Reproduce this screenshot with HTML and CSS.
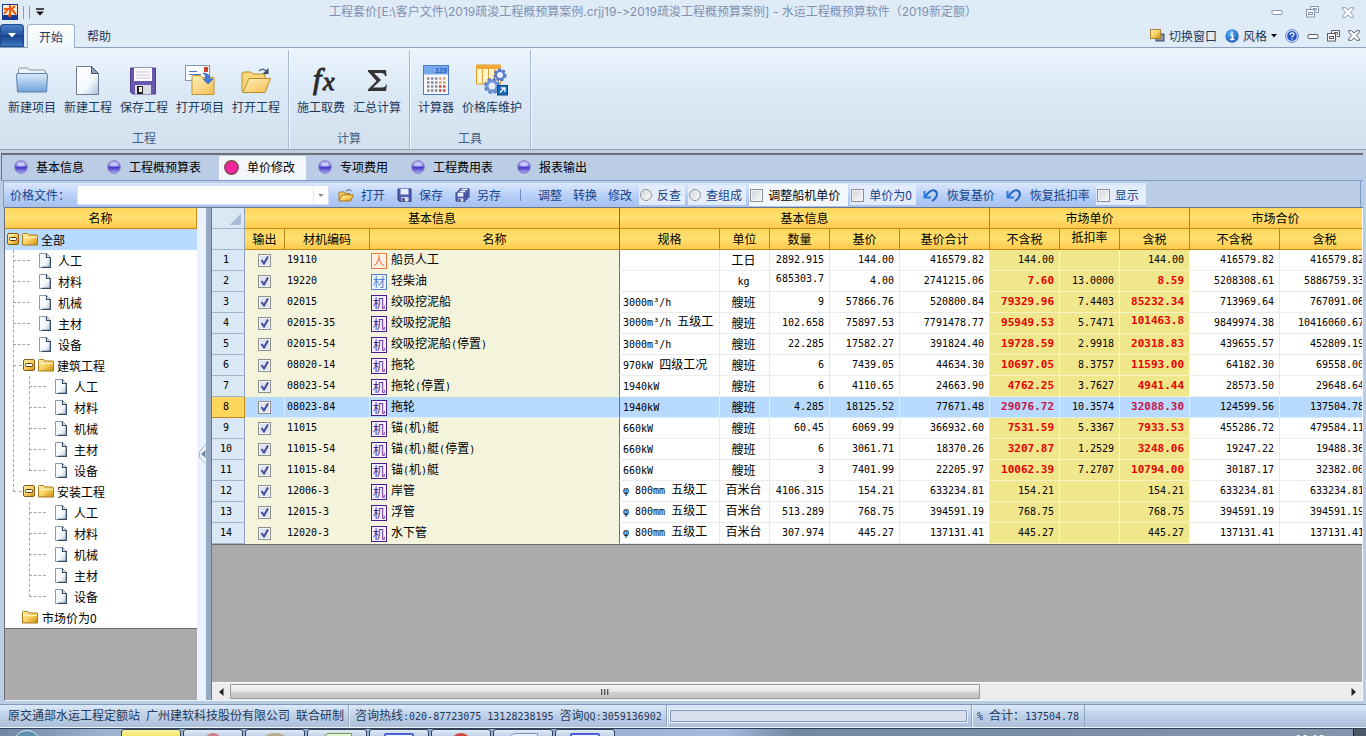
FILE: index.html
```html
<!DOCTYPE html>
<html lang="zh-CN">
<head>
<meta charset="utf-8">
<title>水运工程概预算软件</title>
<link rel="stylesheet" href="styles.css">
</head>
<body>
<svg class="defs" aria-hidden="true">
  <defs>
    <linearGradient id="gGold" x1="0" y1="0" x2="1" y2="1"><stop offset="0" stop-color="#fff0b0"/><stop offset=".5" stop-color="#fbd264"/><stop offset="1" stop-color="#c98a0c"/></linearGradient>
    <linearGradient id="gFold" x1="0" y1="0" x2="1" y2="1"><stop offset="0" stop-color="#fff0b8"/><stop offset="1" stop-color="#f3bf55"/></linearGradient>
    <linearGradient id="gBlue" x1="0" y1="0" x2="0" y2="1"><stop offset="0" stop-color="#dcebfa"/><stop offset="1" stop-color="#6fa3d8"/></linearGradient>
    <linearGradient id="gPage" x1="0" y1="0" x2="1" y2="1"><stop offset="0" stop-color="#fff"/><stop offset=".6" stop-color="#f4f8fd"/><stop offset="1" stop-color="#a9bdd8"/></linearGradient>
    <radialGradient id="gInfo" cx=".4" cy=".3" r=".8"><stop offset="0" stop-color="#5cb6f5"/><stop offset="1" stop-color="#0a4fae"/></radialGradient>
    <linearGradient id="gOrb" x1="0" y1="0" x2="0" y2="1"><stop offset="0" stop-color="#a9a6ee"/><stop offset=".45" stop-color="#7a72e0"/><stop offset=".55" stop-color="#4636c4"/><stop offset="1" stop-color="#b9b2fa"/></linearGradient>
  </defs>
  <symbol id="doc" viewBox="0 0 12 15"><path d="M.5.5h7l4 4v10H.5z" fill="url(#gPage)" stroke="#8a97ad"/><path d="M7.5.5v4h4M11.3 4v10.3H3" fill="none" stroke="#34495f" stroke-width="1.2"/></symbol>
  <symbol id="folder" viewBox="0 0 16 13"><path d="M.5 1.500q0-1 1-1h4l1.500 1.500h7.500q1 0 1 1v9H.5z" fill="url(#gGold)" stroke="#a87a1a"/><path d="M1 4.500h14" stroke="#fff3c0"/></symbol>
  <symbol id="minus" viewBox="0 0 12 12"><rect x=".5" y=".5" width="11" height="11" rx="1.500" fill="url(#gGold)" stroke="#8a5a10"/><rect x="2.500" y="4.500" width="7" height="3" rx="1" fill="#fff" stroke="#5b3a08"/></symbol>
  <symbol id="orb" viewBox="0 0 14 14"><circle cx="7" cy="7" r="6.300" fill="url(#gOrb)" stroke="#7d7bc4"/><ellipse cx="7" cy="4.300" rx="4" ry="2" fill="#e4e4ff" opacity=".7"/></symbol>
  <symbol id="orbOn" viewBox="0 0 14 14"><circle cx="7" cy="7" r="6.300" fill="#f0269c" stroke="#7d4a4e" stroke-width="1.300"/></symbol>
  <symbol id="min" viewBox="0 0 12 12"><rect x="1" y="4.500" width="10" height="4" rx="1" fill="#fff" stroke="currentColor"/></symbol>
  <symbol id="restore" viewBox="0 0 13 12"><path d="M4.500 3.500v-3h8v6h-3" fill="#fff" stroke="currentColor"/><path d="M7 2.500h3.500v2H9.500" fill="none" stroke="currentColor"/><rect x=".5" y="3.500" width="8" height="7.500" fill="#fff" stroke="currentColor"/><rect x="2.500" y="6.500" width="4" height="2" fill="none" stroke="currentColor"/></symbol>
  <symbol id="close" viewBox="0 0 12 11"><path d="M.7.7h3L6 3.200 8.300.7h3v1.500L8.200 5.500l3.100 3.300v1.500h-3L6 7.800 3.700 10.300h-3V8.800l3.100-3.300L.7 2.200z" fill="#fff" stroke="currentColor"/></symbol>
  <symbol id="undo" viewBox="0 0 16 14"><path d="M1.500 3v6.500H8" fill="none" stroke="#2b78dc" stroke-width="2"/><path d="M2.500 8.500C6 3 9 1.700 11.500 2.500c3.500 1.300 3.500 7-2.500 10.500" fill="none" stroke="#2161c4" stroke-width="2"/></symbol>
  <symbol id="disk" viewBox="0 0 15 14"><path d="M1 1h13v12.500H2.500L1 12z" fill="#4e5cae" stroke="#2c3b86"/><rect x="3.500" y="1" width="8" height="5.500" fill="#e9edf8"/><rect x="4.500" y="9" width="7" height="4.500" fill="#d6d9e8"/><rect x="5.500" y="10" width="2" height="3.500" fill="#27306b"/></symbol>
</svg>

<header class="titlebar">
  <div class="quick">
    <svg width="16" height="16" viewBox="0 0 16 16"><rect width="16" height="16" fill="#163a9a"/><rect x="1" y="1" width="14" height="10" fill="#ffe9c8"/><path d="M8 1v11l-2-1M2 5h4L2 10M13 2L9.500 5 14 10.500" fill="none" stroke="#f05a10" stroke-width="2"/></svg>
    <span class="bar"></span><span class="bar"></span>
    <svg width="8" height="8" viewBox="0 0 8 8"><path d="M0 1h8" stroke="#111" stroke-width="1.500"/><path d="M0 3.500h8L4 7.500z" fill="#111"/></svg>
  </div>
  <h1>工程套价[E:\客户文件\2019疏浚工程概预算案例.crjj19-&gt;2019疏浚工程概预算案例] - 水运工程概预算软件（2019新定额）</h1>
  <div class="winbtns">
    <button aria-label="最小化"><svg width="12" height="12"><use href="#min"/></svg></button>
    <button aria-label="还原"><svg width="13" height="12"><use href="#restore"/></svg></button>
    <button aria-label="关闭"><svg width="12" height="11"><use href="#close"/></svg></button>
  </div>
</header>

<nav class="ribbon-tabs">
  <button class="app-btn" aria-label="菜单"><svg width="8" height="5" viewBox="0 0 8 5"><path d="M0 0h8L4 4.500z" fill="#fff"/></svg></button>
  <button class="rtab on">开始</button>
  <button class="rtab">帮助</button>
  <div class="ribbon-right">
    <button><svg width="15" height="14" viewBox="0 0 15 14"><rect x="6" y="5" width="8" height="7" fill="#8795ad" stroke="#3d4a63"/><rect x=".5" y=".5" width="10" height="9" fill="url(#gGold)" stroke="#a88534"/></svg>切换窗口</button>
    <button><svg width="14" height="14" viewBox="0 0 14 14"><circle cx="7" cy="7" r="6.700" fill="url(#gInfo)"/><path d="M7 2.500v2M5.500 6h2v4.500M5 10.500h4.500" stroke="#fff" stroke-width="1.700" fill="none"/></svg>风格<svg width="6" height="4" viewBox="0 0 6 4"><path d="M0 0h6L3 3.500z" fill="#111"/></svg></button>
    <button aria-label="帮助"><svg width="14" height="14" viewBox="0 0 14 14"><circle cx="7" cy="7" r="6.400" fill="#dfe8fa" stroke="#6c87c8"/><circle cx="7" cy="7" r="4.900" fill="#2455c8"/><path d="M5.200 5.700q0-1.800 1.900-1.800t1.900 1.600q0 1-1.900 2v.8M7.100 9.300v1.300" fill="none" stroke="#fff" stroke-width="1.300"/></svg></button>
    <button aria-label="最小化子窗口"><svg width="12" height="12"><use href="#min"/></svg></button>
    <button aria-label="还原子窗口"><svg width="13" height="12"><use href="#restore"/></svg></button>
    <button aria-label="关闭子窗口"><svg width="12" height="11"><use href="#close"/></svg></button>
  </div>
</nav>

<section class="ribbon">
  <div class="group g1">
    <div class="cmds">
      <button><svg width="34" height="32" viewBox="0 0 34 32"><path d="M3.500 27V6q0-2 2-2h7l2 2h14q2 0 2 2v19z" fill="#eef3f8" stroke="#8c939e"/><path d="M1.500 11q0-1.500 1.500-1.500h28q1.500 0 1.500 1.500l-1 17h-29z" fill="url(#gBlue)" stroke="#5b7ea8"/></svg>新建项目</button>
      <button><svg width="34" height="32" viewBox="0 0 34 32"><path d="M5.500 2.500h15l7 7v21h-22z" fill="url(#gPage)" stroke="#6d7a90"/><path d="M20.500 2.500l7 7h-7z" fill="#8fa0b8" stroke="#48566c"/></svg>新建工程</button>
      <button><svg width="34" height="32" viewBox="0 0 34 32"><path d="M3.500 4h25v26h-23l-2-2z" fill="#6a58b0" stroke="#4b3c8c"/><rect x="7" y="4" width="18" height="13" fill="#fafafc"/><path d="M9 8h14M9 11h14M9 14h14" stroke="#c7c9d4"/><rect x="8" y="21" width="16" height="9" fill="#dadce6"/><rect x="10" y="22" width="6" height="8" fill="#222"/><rect x="12" y="23" width="3" height="5" fill="#eee"/></svg>保存工程</button>
      <button><svg width="34" height="32" viewBox="0 0 34 32"><rect x="2.500" y="1.500" width="24" height="15" fill="#fcfcff" stroke="#8793ab"/><path d="M6 7.500h8M6 10.500h12" stroke="#4a78c8"/><rect x="21" y="3" width="4" height="5" fill="#c8442a"/><path d="M9 30.500V13q0-1.500 1.500-1.500h7l2 2H31v17z" fill="url(#gFold)" stroke="#c0942e"/><path d="M20 9q7 0 7 6h3l-5 5-5-5h3q0-4-3-6z" fill="#3f7de0" stroke="#1e56b4" stroke-width=".6"/></svg>打开项目</button>
      <button><svg width="34" height="32" viewBox="0 0 34 32"><path d="M3 28V10q0-2 2-2h7l2 2h12v5" fill="#f8d77c" stroke="#b98c2a"/><path d="M4 28.500l6-14h21.500L26 28.500z" fill="url(#gFold)" stroke="#b98c2a"/><path d="M20 7q4-4 8 1" fill="none" stroke="#5a7490" stroke-width="1.500"/><path d="M29.500 4v6h-6z" fill="#3a5068"/></svg>打开工程</button>
    </div>
    <div class="gname">工程</div>
  </div>
  <div class="group g2">
    <div class="cmds">
      <button><svg class="fx-icon" width="34" height="32" viewBox="0 0 34 32"><text x="9" y="25" class="fx">f</text><text x="19" y="26" class="fx fx-x">x</text></svg>施工取费</button>
      <button><svg width="34" height="32" viewBox="0 0 34 32"><path d="M8 6h18l.5 6h-1.500q-.5-3-4-3h-7l7 7-8 7.500h9q3.500 0 4.500-3.500H27L26 27H8v-1.500l8.500-8.500L8 7.500z" fill="#333"/></svg>汇总计算</button>
    </div>
    <div class="gname">计算</div>
  </div>
  <div class="group g3">
    <div class="cmds">
      <button><svg width="34" height="32" viewBox="0 0 34 32"><rect x="4.500" y="1.500" width="25" height="29" fill="#f7f9fd" stroke="#4d7cc4"/><rect x="5" y="2" width="24" height="8.500" fill="#78a8ec"/><text x="16" y="9" class="lcd">123</text><g fill="none" stroke-width="2.500"><path d="M8 14.500h12M8 18.500h12M8 22.500h12M8 26.500h12" stroke="#8b8a98" stroke-dasharray="2.500 1.500"/><path d="M20 14.500h7M20 18.500h7" stroke="#e0a468" stroke-dasharray="2.500 1.500"/><path d="M20 22.500h7M20 26.500h7" stroke="#c84848" stroke-dasharray="2.500 1.500"/></g></svg>计算器</button>
      <button><svg width="34" height="32" viewBox="0 0 34 32"><path d="M1.500 1h24v19h-24z" fill="#fff3c8" stroke="#d99a2c"/><path d="M1 1h25v4H1z" fill="#f2a93a"/><path d="M7.500 5v15M13.500 5v15M19.500 5v15" stroke="#e0a23c"/><g fill="#e6eefb" stroke="#5379c8"><circle cx="25" cy="11" r="4.500" stroke-width="4" stroke-dasharray="2.500 1.300"/><circle cx="25" cy="11" r="4" stroke-width="2"/><circle cx="17" cy="22" r="6" stroke-width="4" stroke-dasharray="3 1.700"/><circle cx="17" cy="22" r="5" stroke-width="3" stroke="#6f92d8"/></g><rect x="22.500" y="21.500" width="10" height="9.500" fill="#1a6bb8" stroke="#0d4885"/><path d="M25 28.500l4-4M26 24h4v4" stroke="#fff" stroke-width="1.300" fill="none"/></svg>价格库维护</button>
    </div>
    <div class="gname">工具</div>
  </div>
</section>

<main class="workspace">
  <nav class="doc-tabs">
    <button class="dtab w93"><svg width="14" height="14"><use href="#orb"/></svg>基本信息</button>
    <button class="dtab w118"><svg width="14" height="14"><use href="#orb"/></svg>工程概预算表</button>
    <button class="dtab w93 on"><svg width="15" height="15"><use href="#orbOn"/></svg>单价修改</button>
    <button class="dtab w93"><svg width="14" height="14"><use href="#orb"/></svg>专项费用</button>
    <button class="dtab w106"><svg width="14" height="14"><use href="#orb"/></svg>工程费用表</button>
    <button class="dtab w93"><svg width="14" height="14"><use href="#orb"/></svg>报表输出</button>
  </nav>

  <div class="toolbar">
    <div class="tools">
      <label class="plabel" for="pfile">价格文件：</label>
      <select id="pfile"><option></option></select>
      <button class="tb"><svg width="16" height="14" viewBox="0 0 16 14"><path d="M1 12.500V4h5l1 1.500h5V8" fill="#f4d070" stroke="#a87818"/><path d="M1 13l3-6h11.500l-3 6z" fill="url(#gGold)" stroke="#a87818"/><path d="M8 3q3-3 5.500 0" fill="none" stroke="#44566c"/></svg>打开</button>
      <button class="tb"><svg width="15" height="14"><use href="#disk"/></svg>保存</button>
      <button class="tb"><svg width="15" height="15" viewBox="0 0 15 15"><svg x="4" y="0" width="11" height="10"><use href="#disk"/></svg><svg x="2" y="2" width="11" height="10"><use href="#disk"/></svg><svg x="0" y="4" width="11" height="10"><use href="#disk"/></svg></svg>另存</button>
      <span class="vsep"></span>
      <button class="tx">调整</button>
      <button class="tx">转换</button>
      <button class="tx">修改</button>
      <label class="opt"><input type="radio" name="q">反查</label>
      <label class="opt"><input type="radio" name="q">查组成</label>
      <label class="opt strong"><input type="checkbox">调整船机单价</label>
      <label class="opt"><input type="checkbox">单价为0</label>
      <button class="tb un"><svg width="16" height="14"><use href="#undo"/></svg>恢复基价</button>
      <button class="tb un"><svg width="16" height="14"><use href="#undo"/></svg>恢复抵扣率</button>
      <label class="opt"><input type="checkbox">显示</label>
    </div>
  </div>

  <div class="panes">
    <aside class="tree">
      <div class="tree-head">名称</div>
      <ul class="lv0">
        <li class="node sel"><svg width="12" height="12"><use href="#minus"/></svg><svg width="16" height="13"><use href="#folder"/></svg>全部</li>
        <li>
          <ul class="lv1">
            <li class="node leaf"><svg width="12" height="15"><use href="#doc"/></svg>人工</li>
            <li class="node leaf"><svg width="12" height="15"><use href="#doc"/></svg>材料</li>
            <li class="node leaf"><svg width="12" height="15"><use href="#doc"/></svg>机械</li>
            <li class="node leaf"><svg width="12" height="15"><use href="#doc"/></svg>主材</li>
            <li class="node leaf"><svg width="12" height="15"><use href="#doc"/></svg>设备</li>
            <li class="node branch"><svg width="12" height="12"><use href="#minus"/></svg><svg width="16" height="13"><use href="#folder"/></svg>建筑工程</li>
            <li>
              <ul class="lv2">
                <li class="node leaf"><svg width="12" height="15"><use href="#doc"/></svg>人工</li>
                <li class="node leaf"><svg width="12" height="15"><use href="#doc"/></svg>材料</li>
                <li class="node leaf"><svg width="12" height="15"><use href="#doc"/></svg>机械</li>
                <li class="node leaf"><svg width="12" height="15"><use href="#doc"/></svg>主材</li>
                <li class="node leaf"><svg width="12" height="15"><use href="#doc"/></svg>设备</li>
              </ul>
            </li>
            <li class="node branch"><svg width="12" height="12"><use href="#minus"/></svg><svg width="16" height="13"><use href="#folder"/></svg>安装工程</li>
          </ul>
          <ul class="lv2 tail">
            <li class="node leaf"><svg width="12" height="15"><use href="#doc"/></svg>人工</li>
            <li class="node leaf"><svg width="12" height="15"><use href="#doc"/></svg>材料</li>
            <li class="node leaf"><svg width="12" height="15"><use href="#doc"/></svg>机械</li>
            <li class="node leaf"><svg width="12" height="15"><use href="#doc"/></svg>主材</li>
            <li class="node leaf"><svg width="12" height="15"><use href="#doc"/></svg>设备</li>
          </ul>
        </li>
        <li class="node root2"><svg width="16" height="13"><use href="#folder"/></svg>市场价为0</li>
      </ul>
    </aside>
    <div class="splitter"><svg width="7" height="20" viewBox="0 0 7 20"><path d="M6.500.5L.5 8v5l6 6.500" fill="#eef4fb" stroke="#9fb2cc"/><path d="M6.500 6v8L2 10z" fill="#7188a8"/></svg></div>

    <section class="grid">
      <div class="grid-body">
        <table>
          <colgroup><col class="c33"><col class="c40"><col class="c85"><col class="c250"><col class="c100"><col class="c50"><col class="c60"><col class="c70"><col class="c90"><col class="c70"><col class="c60"><col class="c70"><col class="c90"><col class="c90"></colgroup>
          <thead>
            <tr><th class="rh corner"></th><th colspan="3" class="fz">基本信息</th><th colspan="5">基本信息</th><th colspan="3">市场单价</th><th colspan="2" class="cut">市场合价</th></tr>
            <tr><th class="rh"></th><th>输出</th><th>材机编码</th><th class="fz">名称</th><th>规格</th><th>单位</th><th>数量</th><th>基价</th><th>基价合计</th><th>不含税</th><th class="hi">抵扣率</th><th>含税</th><th>不含税</th><th>含税</th></tr>
          </thead>
          <tbody>
            <tr><th class="rh">1</th><td class="ck"><input type="checkbox" checked aria-label="输出 1"></td><td class="code">19110</td><td class="name"><i class="k k-r">人</i>船员人工</td><td class="sp"></td><td class="u">工日</td><td>2892.915</td><td>144.00</td><td>416579.82</td><td class="y">144.00</td><td class="y"></td><td class="y">144.00</td><td>416579.82</td><td>416579.82</td></tr>
            <tr><th class="rh">2</th><td class="ck"><input type="checkbox" checked aria-label="输出 2"></td><td class="code">19220</td><td class="name"><i class="k k-c">材</i>轻柴油</td><td class="sp"></td><td class="u"><span class="m">kg</span></td><td class="hi">685303.7</td><td>4.00</td><td>2741215.06</td><td class="y r">7.60</td><td class="y">13.0000</td><td class="y r">8.59</td><td>5208308.61</td><td>5886759.33</td></tr>
            <tr><th class="rh">3</th><td class="ck"><input type="checkbox" checked aria-label="输出 3"></td><td class="code">02015</td><td class="name"><i class="k">机</i>绞吸挖泥船</td><td class="sp"><span class="m">3000m³/h</span></td><td class="u">艘班</td><td>9</td><td>57866.76</td><td>520800.84</td><td class="y r">79329.96</td><td class="y">7.4403</td><td class="y r">85232.34</td><td>713969.64</td><td>767091.06</td></tr>
            <tr><th class="rh">4</th><td class="ck"><input type="checkbox" checked aria-label="输出 4"></td><td class="code">02015-35</td><td class="name"><i class="k">机</i>绞吸挖泥船</td><td class="sp hi"><span class="m">3000m³/h </span>五级工</td><td class="u">艘班</td><td>102.658</td><td>75897.53</td><td>7791478.77</td><td class="y r">95949.53</td><td class="y">5.7471</td><td class="y r hi">101463.8</td><td>9849974.38</td><td>10416060.67</td></tr>
            <tr><th class="rh">5</th><td class="ck"><input type="checkbox" checked aria-label="输出 5"></td><td class="code">02015-54</td><td class="name"><i class="k">机</i>绞吸挖泥船<span class="m">(</span>停置<span class="m">)</span></td><td class="sp"><span class="m">3000m³/h</span></td><td class="u">艘班</td><td>22.285</td><td>17582.27</td><td>391824.40</td><td class="y r">19728.59</td><td class="y">2.9918</td><td class="y r">20318.83</td><td>439655.57</td><td>452809.19</td></tr>
            <tr><th class="rh">6</th><td class="ck"><input type="checkbox" checked aria-label="输出 6"></td><td class="code">08020-14</td><td class="name"><i class="k">机</i>拖轮</td><td class="sp"><span class="m">970kW </span>四级工况</td><td class="u">艘班</td><td>6</td><td>7439.05</td><td>44634.30</td><td class="y r">10697.05</td><td class="y">8.3757</td><td class="y r">11593.00</td><td>64182.30</td><td>69558.00</td></tr>
            <tr><th class="rh">7</th><td class="ck"><input type="checkbox" checked aria-label="输出 7"></td><td class="code">08023-54</td><td class="name"><i class="k">机</i>拖轮<span class="m">(</span>停置<span class="m">)</span></td><td class="sp"><span class="m">1940kW</span></td><td class="u">艘班</td><td>6</td><td>4110.65</td><td>24663.90</td><td class="y r">4762.25</td><td class="y">3.7627</td><td class="y r">4941.44</td><td>28573.50</td><td>29648.64</td></tr>
            <tr class="cur"><th class="rh">8</th><td class="ck"><input type="checkbox" checked aria-label="输出 8"></td><td class="code">08023-84</td><td class="name"><i class="k">机</i>拖轮</td><td class="sp"><span class="m">1940kW</span></td><td class="u">艘班</td><td>4.285</td><td>18125.52</td><td>77671.48</td><td class="y r">29076.72</td><td class="y">10.3574</td><td class="y r">32088.30</td><td>124599.56</td><td>137504.78</td></tr>
            <tr><th class="rh">9</th><td class="ck"><input type="checkbox" checked aria-label="输出 9"></td><td class="code">11015</td><td class="name"><i class="k">机</i>锚<span class="m">(</span>机<span class="m">)</span>艇</td><td class="sp"><span class="m">660kW</span></td><td class="u">艘班</td><td>60.45</td><td>6069.99</td><td>366932.60</td><td class="y r">7531.59</td><td class="y">5.3367</td><td class="y r">7933.53</td><td>455286.72</td><td>479584.11</td></tr>
            <tr><th class="rh">10</th><td class="ck"><input type="checkbox" checked aria-label="输出 10"></td><td class="code">11015-54</td><td class="name"><i class="k">机</i>锚<span class="m">(</span>机<span class="m">)</span>艇<span class="m">(</span>停置<span class="m">)</span></td><td class="sp"><span class="m">660kW</span></td><td class="u">艘班</td><td>6</td><td>3061.71</td><td>18370.26</td><td class="y r">3207.87</td><td class="y">1.2529</td><td class="y r">3248.06</td><td>19247.22</td><td>19488.36</td></tr>
            <tr><th class="rh">11</th><td class="ck"><input type="checkbox" checked aria-label="输出 11"></td><td class="code">11015-84</td><td class="name"><i class="k">机</i>锚<span class="m">(</span>机<span class="m">)</span>艇</td><td class="sp"><span class="m">660kW</span></td><td class="u">艘班</td><td>3</td><td>7401.99</td><td>22205.97</td><td class="y r">10062.39</td><td class="y">7.2707</td><td class="y r">10794.00</td><td>30187.17</td><td>32382.00</td></tr>
            <tr><th class="rh">12</th><td class="ck"><input type="checkbox" checked aria-label="输出 12"></td><td class="code">12006-3</td><td class="name"><i class="k">机</i>岸管</td><td class="sp hi"><span class="m phi">φ</span><span class="m">800mm </span>五级工</td><td class="u hi">百米台</td><td>4106.315</td><td>154.21</td><td>633234.81</td><td class="y">154.21</td><td class="y"></td><td class="y">154.21</td><td>633234.81</td><td>633234.81</td></tr>
            <tr><th class="rh">13</th><td class="ck"><input type="checkbox" checked aria-label="输出 13"></td><td class="code">12015-3</td><td class="name"><i class="k">机</i>浮管</td><td class="sp hi"><span class="m phi">φ</span><span class="m">800mm </span>五级工</td><td class="u hi">百米台</td><td>513.289</td><td>768.75</td><td>394591.19</td><td class="y">768.75</td><td class="y"></td><td class="y">768.75</td><td>394591.19</td><td>394591.19</td></tr>
            <tr><th class="rh">14</th><td class="ck"><input type="checkbox" checked aria-label="输出 14"></td><td class="code">12020-3</td><td class="name"><i class="k">机</i>水下管</td><td class="sp hi"><span class="m phi">φ</span><span class="m">800mm </span>五级工</td><td class="u hi">百米台</td><td>307.974</td><td>445.27</td><td>137131.41</td><td class="y">445.27</td><td class="y"></td><td class="y">445.27</td><td>137131.41</td><td>137131.41</td></tr>
          </tbody>
        </table>
      </div>
      <div class="hscroll">
        <button aria-label="向左"><svg width="5" height="8" viewBox="0 0 5 8"><path d="M4.500 0v8L0 4z" fill="#222"/></svg></button>
        <div class="track"><div class="thumb"><span></span><span></span><span></span></div></div>
        <button aria-label="向右"><svg width="5" height="8" viewBox="0 0 5 8"><path d="M.5 0v8L5 4z" fill="#222"/></svg></button>
      </div>
    </section>
  </div>
</main>

<footer class="status">
  <span>原交通部水运工程定额站&ensp;广州建软科技股份有限公司&ensp;联合研制</span>
  <span class="cell">咨询热线<span class="m">:020-87723075 13128238195 </span>咨询<span class="m">QQ:3059136902</span></span>
  <span class="cell prog"><span class="bar-box" role="progressbar" aria-label="进度"></span></span>
  <span class="cell total"><span class="m">% </span>合计：<span class="m">137504.78</span></span>
</footer>

<div class="taskbar">
  <span class="orbwrap"><span class="start"></span></span>
  <span class="task hot"></span>
  <span class="task"><span class="ic pink"></span></span>
  <span class="task"><span class="ic tan"></span></span>
  <span class="task"><span class="ic green"></span></span>
  <span class="task"><span class="ic blue"></span></span>
  <span class="task"><span class="ic red"></span></span>
  <span class="task"><span class="ic pale"></span></span>
  <span class="task"><span class="ic blue"></span></span>
  <span class="clock">10:10</span>
  <span class="peek"></span>
</div>
</body>
</html>
```
FILE: styles.css
```css
* { box-sizing: border-box; }

html, body { height: 100%; }

body {
  margin: 0;
  display: flex;
  flex-direction: column;
  overflow: hidden;
  background: #dfebf7;
  color: #000;
  font: 12px/16px "Noto Sans CJK SC", sans-serif;
}

button {
  border: 0;
  padding: 0;
  background: none;
  color: inherit;
  font: inherit;
  white-space: nowrap;
}

svg { flex: none; display: block; }
.defs { position: absolute; width: 0; height: 0; }
ul { list-style: none; margin: 0; padding: 0; }
.m { font: 10px/16px "DejaVu Sans Mono", "Noto Sans CJK SC", monospace; white-space: pre; }

/* title bar */
.titlebar {
  flex: none;
  display: grid;
  grid-template-columns: 80px 1fr 140px;
  align-items: center;
  height: 24px;
}
.quick { display: flex; align-items: center; gap: 5px; padding-left: 2px; }
.quick .bar { width: 1px; height: 13px; background: #8b9cb5; }
.quick svg:last-child { margin-left: 1px; }
.titlebar h1 {
  margin: 0;
  text-align: center;
  font-size: 12px;
  font-weight: 400;
  line-height: 24px;
  font-family: Inter, "Noto Sans CJK SC", sans-serif;
  font-variant-ligatures: none;
  color: #7f90b0;
  white-space: nowrap;
}
.winbtns { display: flex; align-items: center; justify-content: flex-end; gap: 23px; padding-right: 12px; height: 20px; color: #8495b2; }

/* ribbon tabs */
.ribbon-tabs {
  flex: none;
  display: flex;
  align-items: flex-end;
  height: 24px;
  border-bottom: 1px solid #8ba0bd;
  color: #1e395b;
}
.app-btn {
  display: flex;
  align-items: center;
  justify-content: center;
  width: 24px;
  height: 23px;
  margin-right: 3px;
  border: 1px solid #1d4c8f;
  border-radius: 3px 3px 0 0;
  background: linear-gradient(#4a7fc4, #2a5ba6 45%, #154089 50%, #3c78be);
}
.rtab { width: 48px; height: 23px; color: #1e395b; }
.rtab.on {
  height: 24px;
  margin-bottom: -1px;
  border: 1px solid #9fb2cc;
  border-bottom: 0;
  border-radius: 3px 3px 0 0;
  background: linear-gradient(#fff, #edf5fc);
}
.ribbon-right { margin-left: auto; display: flex; align-items: center; gap: 8px; height: 23px; padding-right: 6px; color: #5a5f68; }
.ribbon-right button { display: flex; align-items: center; gap: 4px; }
.ribbon-right button:nth-child(-n+2) { color: #1e395b; }

/* ribbon */
.ribbon {
  flex: none;
  display: flex;
  height: 102px;
  padding-top: 2px;
  background: linear-gradient(#ebf5fd, #dbe8f6 45%, #d3e0ee);
  border-bottom: 1px solid #8ba0bd;
}
.group { display: flex; flex-direction: column; justify-content: space-between; border-right: 1px solid #a9bacf; box-shadow: 1px 0 #f2f8fe; color: #1e395b; }
.cmds { display: flex; padding: 14px 4px 0 4px; }
.cmds button { display: flex; flex-direction: column; align-items: center; gap: 3px; min-width: 56px; }
.g3 .cmds { padding-left: 6px; padding-right: 2px; }
.g3 .cmds button:first-child { min-width: 40px; }
.g3 .cmds button:last-child { min-width: 72px; }
.gname { text-align: center; line-height: 16px; padding-bottom: 3px; color: #3e5c86; }
.fx-icon { overflow: visible; }
.fx { font: italic 30px "Liberation Serif", serif; fill: #2b2b2b; stroke: #2b2b2b; stroke-width: 1; }
.fx-x { font-size: 26px; }
.lcd { font: italic bold 7px "Liberation Sans", sans-serif; fill: #1f57b8; }

/* workspace */
.workspace {
  flex: 1;
  min-height: 0;
  display: flex;
  flex-direction: column;
  padding: 0 3px 0 1px;
  border-top: 3px solid #c3cedb;
  background: #bacde5;
}
.doc-tabs { flex: none; display: flex; align-items: flex-end; height: 28px; border-top: 2px solid #6a6f78; border-left: 1px solid #6a6f78; border-bottom: 1px solid #7e9ac6; padding-left: 6px; }
.dtab { display: flex; align-items: center; gap: 8px; height: 24px; padding: 0 0 2px 6px; border-radius: 2px 2px 0 0; }
.dtab.on { padding-left: 5px; background: #f3f7fd; width: 87px; margin-right: 6px; margin-left: -1px; }
.w93 { width: 93px; }
.w118 { width: 119px; }
.w106 { width: 106px; }

.toolbar { flex: none; display: flex; height: 26px; margin: 0 2px 0 2px; padding-top: 2px; border-left: 1px solid #7e9ac6; border-right: 1px solid #7e9ac6; }
.tools {
  display: flex;
  align-items: center;
  white-space: nowrap;
  background: linear-gradient(#dbe7fc, #b4cdf6 60%, #a6c1f0);
  color: #15428b;
}
.plabel { width: 73px; padding-left: 6px; }
#pfile {
  width: 252px;
  height: 20px;
  margin: 0 9px 0 0;
  border: 1px solid #d5e2f5;
  border-radius: 0;
  appearance: none;
  background: #fff url("data:image/svg+xml,%3Csvg xmlns='http://www.w3.org/2000/svg' width='15' height='18'%3E%3Cpath d='M.5 0v18' stroke='%23e4e8f0'/%3E%3Cpath d='M5 8h6L8 11z' fill='%23909090'/%3E%3C/svg%3E") right 0 center no-repeat;
}
.tb { display: flex; align-items: center; gap: 7px; margin-right: 12px; }
.vsep { width: 1px; height: 12px; margin: 0 17px 0 7px; background: #6c8cc4; }
.tx { margin-right: 11px; }
.tx + .opt { margin-left: -4px; }
.opt { display: flex; align-items: center; gap: 5px; height: 20px; padding: 0 4px 0 1px; margin-right: 3px; background: #e3ecfc; }
.opt.strong { height: 22px; margin-right: 2px; padding-right: 8px; background: #f3f7fe; color: #000; }
.opt:nth-last-child(4) { margin-right: 7px; }
.opt:last-child { margin: 0; padding-right: 7px; }
.tb.un { gap: 8px; margin-right: 11px; }
.tb.un:nth-last-child(2) { margin-right: 6px; }
input[type=radio], input[type=checkbox] {
  appearance: none;
  flex: none;
  width: 13px;
  height: 13px;
  margin: 0;
  border: 1px solid #8e8f8f;
  background: linear-gradient(135deg, #cfd3d9, #fafafa);
  box-shadow: inset 0 0 0 1px #f4f4f4;
}
input[type=radio] { border-radius: 50%; width: 12px; height: 12px; }
input[type=checkbox]:checked {
  background: #dfe3f0 url("data:image/svg+xml,%3Csvg xmlns='http://www.w3.org/2000/svg' width='11' height='11'%3E%3Cpath d='M2.500 5l2.500 3.500L9 1.500' fill='none' stroke='%233d4d96' stroke-width='2'/%3E%3C/svg%3E") center no-repeat;
}

/* panes */
.panes { flex: 1; min-height: 0; display: flex; margin: 0 0 3px 3px; border-left: 1px solid #6a6f78; border-top: 1px solid #6a7688; border-right: 0; border-bottom: 1px solid #f2f6fb; background: #96a8c2; }
.tree { flex: none; width: 192px; background: #ababab; }
.tree-head, thead th { background: linear-gradient(#ffd65c, #ffe070 50%, #ffc94a); }
.tree-head { height: 21px; line-height: 20px; text-align: center; border-bottom: 1px solid #c18a1c; border-right: 1px solid #c18a1c; }
.lv0 { background: #fff; border-bottom: 1px solid #6d6d6d; }
.node { position: relative; display: flex; align-items: center; height: 21px; line-height: 19px; padding-bottom: 1px; }
.lv0 > .node { padding-left: 2px; gap: 3px; }
.lv0 > .sel { background: #b8daff; }
.lv0 > .root2 { padding-left: 17px; gap: 4px; }
.lv1 { position: relative; margin-left: 8px; }
.lv2 { position: relative; margin-left: 16px; }
.lv2.tail { margin-left: 24px; }
.leaf { padding-left: 26px; gap: 7px; }
.branch { padding-left: 10px; gap: 3px; }
.leaf::before, .branch::before, .lv1::before, .lv2::before { content: ""; position: absolute; left: 0; border: 0 dashed #a6a6a6; }
.leaf::before { top: 10px; width: 17px; border-top-width: 1px; }
.branch::before { top: 10px; width: 9px; border-top-width: 1px; }
.lv1::before, .lv2::before { top: 0; bottom: 10px; border-left-width: 1px; }
.splitter { flex: none; display: flex; align-items: center; justify-content: flex-end; width: 9px; margin-right: 5px; background: #e9f2fc; }

.grid { flex: 1; min-width: 0; display: flex; flex-direction: column; border-left: 1px solid #6a7688; border-right: 1px solid #f2f6fb; }
.grid-body { flex: 1; min-height: 0; overflow: hidden; background: #ababab; }
table { table-layout: fixed; width: 1158px; border-collapse: separate; border-spacing: 0; border-bottom: 1px solid #6d6d6d; }
.c33 { width: 33px; } .c40 { width: 40px; } .c50 { width: 50px; } .c60 { width: 60px; } .c70 { width: 70px; }
.c85 { width: 85px; } .c90 { width: 90px; } .c100 { width: 100px; } .c250 { width: 250px; }
th, td { height: 21px; padding: 0; font-weight: 400; line-height: 16px; white-space: nowrap; }
thead th { border-right: 1px solid #b5851c; border-bottom: 1px solid #c18a1c; text-align: center; }
thead th.cut { padding-right: 8px; }
tbody td {
  padding-right: 5px;
  text-align: right;
  font: 10px/16px "DejaVu Sans Mono", monospace;
  background: #fff;
  border-right: 1px solid #e8e8e8;
  border-bottom: 1px solid #ececec;
}
th.rh { background: #dae7f5; border-right: 1px solid #8fa3bf; border-bottom: 1px solid #9fb2cc; }
tbody th.rh { font: 10px/16px "DejaVu Sans Mono", monospace; padding-right: 4px; }
th.corner { background: linear-gradient(135deg, transparent 50%, #a9bdd6 50%) 18px 6px / 11px 11px no-repeat #dae7f5; }
thead th.fz, tbody td.name { border-right: 1px solid #6d6d6d; }
tbody td.ck, tbody td.code, tbody td.name { background: #f4f4dc; border-bottom-color: #f4f4dc; }
tbody td.ck, tbody td.code { border-right-color: #f4f4dc; }
td.ck { padding: 0; text-align: center; }
td.ck input { display: block; margin: 0 auto; }
tbody td.code { text-align: left; padding-left: 2px; }
tbody td.name, tbody td.sp, tbody td.u { font: 12px/16px "Noto Sans CJK SC", sans-serif; text-align: left; }
tbody td.name { padding-left: 1px; }
tbody td.sp { padding: 0 0 0 3px; }
tbody td.u { padding: 0 2px 0 0; text-align: center; }
.m.phi { display: inline-block; width: 12px; }
.k { display: inline-block; width: 16px; height: 16px; margin-right: 4px; border: 1px solid #4b1a8c; color: #4b1a8c; font-style: normal; line-height: 13px; text-align: center; background: #f6effc; vertical-align: middle; }
.k-r { border-color: #e67a3c; color: #e67a3c; background: #fdf1e4; }
.k-c { border-color: #5580c8; color: #5580c8; background: #e8f2fc; }
tbody td.y { background: #f0e68c; border-right-color: #faf6d0; border-bottom-color: #f8f3c4; }
tbody td.r { color: #e60000; font-weight: 700; font-size: 11px; }
tbody td.hi, thead th.hi { vertical-align: top; }
tbody .cur td, tbody .cur td.y { background: #b8daff; border-right-color: #dcecfd; border-bottom-color: #dcecfd; }
tbody .cur td.name { border-right-color: #6d6d6d; }
tbody .cur td.r { color: #c8144c; }
tbody .cur th.rh { background: #ffd65c; border-color: #c18a1c; }

.hscroll { flex: none; display: flex; align-items: center; height: 18px; background: #ececec; border-top: 1px solid #fafafa; }
.hscroll button { width: 18px; display: flex; justify-content: center; }
.track { flex: 1; }
.thumb {
  display: flex;
  align-items: center;
  justify-content: center;
  gap: 1px;
  width: 67.3%;
  height: 15px;
  border: 1px solid #9a9a9a;
  border-radius: 1px;
  background: linear-gradient(#f6f6f6, #e4e4e4 50%, #cfcfcf 55%, #c4c4c4);
}
.thumb span { width: 2px; height: 6px; background: #555; border-right: 1px solid #aaa; }

/* status bar */
.status {
  flex: none;
  display: flex;
  align-items: stretch;
  height: 24px;
  padding-left: 8px;
  line-height: 20px;
  border-top: 1px solid #7f98bb;
  border-bottom: 1px solid #eef4fb;
  background: linear-gradient(#dce9f8, #bdd0e7 50%, #adc0da);
  color: #1e395b;
  white-space: nowrap;
}
.cell { margin-left: 4px; padding-left: 6px; border-left: 1px solid #8fa5c4; box-shadow: inset 1px 0 #e6f0fb; }
.prog { display: flex; align-items: center; padding: 0 4px 0 3px; width: 305px; }
.bar-box { flex: 1; height: 12px; border: 1px solid #7f98bb; background: #d9dfee; box-shadow: 0 0 0 1px #eef4fb; }
.total { margin-left: 0; padding-left: 5px; padding-right: 5px; border-right: 1px solid #8fa5c4; }

/* taskbar */
.taskbar { flex: none; display: flex; height: 8px; overflow: hidden; background: linear-gradient(90deg, #6f86a6, #9db4d2 8%, #9ab2d4 45%, #a4bce0 53%, #7488a2 58%, #8495ad); border-top: 1px solid #2f3f58; }
.orbwrap { width: 121px; }
.start { display: block; width: 28px; height: 28px; margin: 1px 0 0 13px; border-radius: 50%; border: 1px solid #dfeaf6; background: #5c8fae; }
.task { display: flex; justify-content: center; width: 60px; height: 30px; margin-right: 2px; border: 1px solid #2f3f58; border-radius: 3px; background: linear-gradient(#e2ebf6, #b5c8e2 8px); }
.task.hot { background: linear-gradient(#fdf3a0, #f3e25a 8px); }
.ic { width: 30px; height: 24px; margin-top: 3px; border-radius: 2px; }
.pink { width: 20px; border-radius: 50%; background: #c9808a; }
.tan { border-radius: 50%; background: #b8ab8c; }
.green { background: #e4f3da; border: 1px solid #6ea24e; border-radius: 8px 0 0 0; }
.blue { background: #f2f5ff; border: 2px solid #4c60dc; }
.red { width: 22px; border-radius: 50%; background: #cf4a3e; }
.pale { background: #e6ecf8; border: 1px solid #8193c0; border-radius: 8px 0 0 0; }
.clock { margin: 4px 28px 0 auto; color: #fff; line-height: 12px; }
.peek { width: 13px; background: #4d5866; border-left: 1px solid #222; }
```
